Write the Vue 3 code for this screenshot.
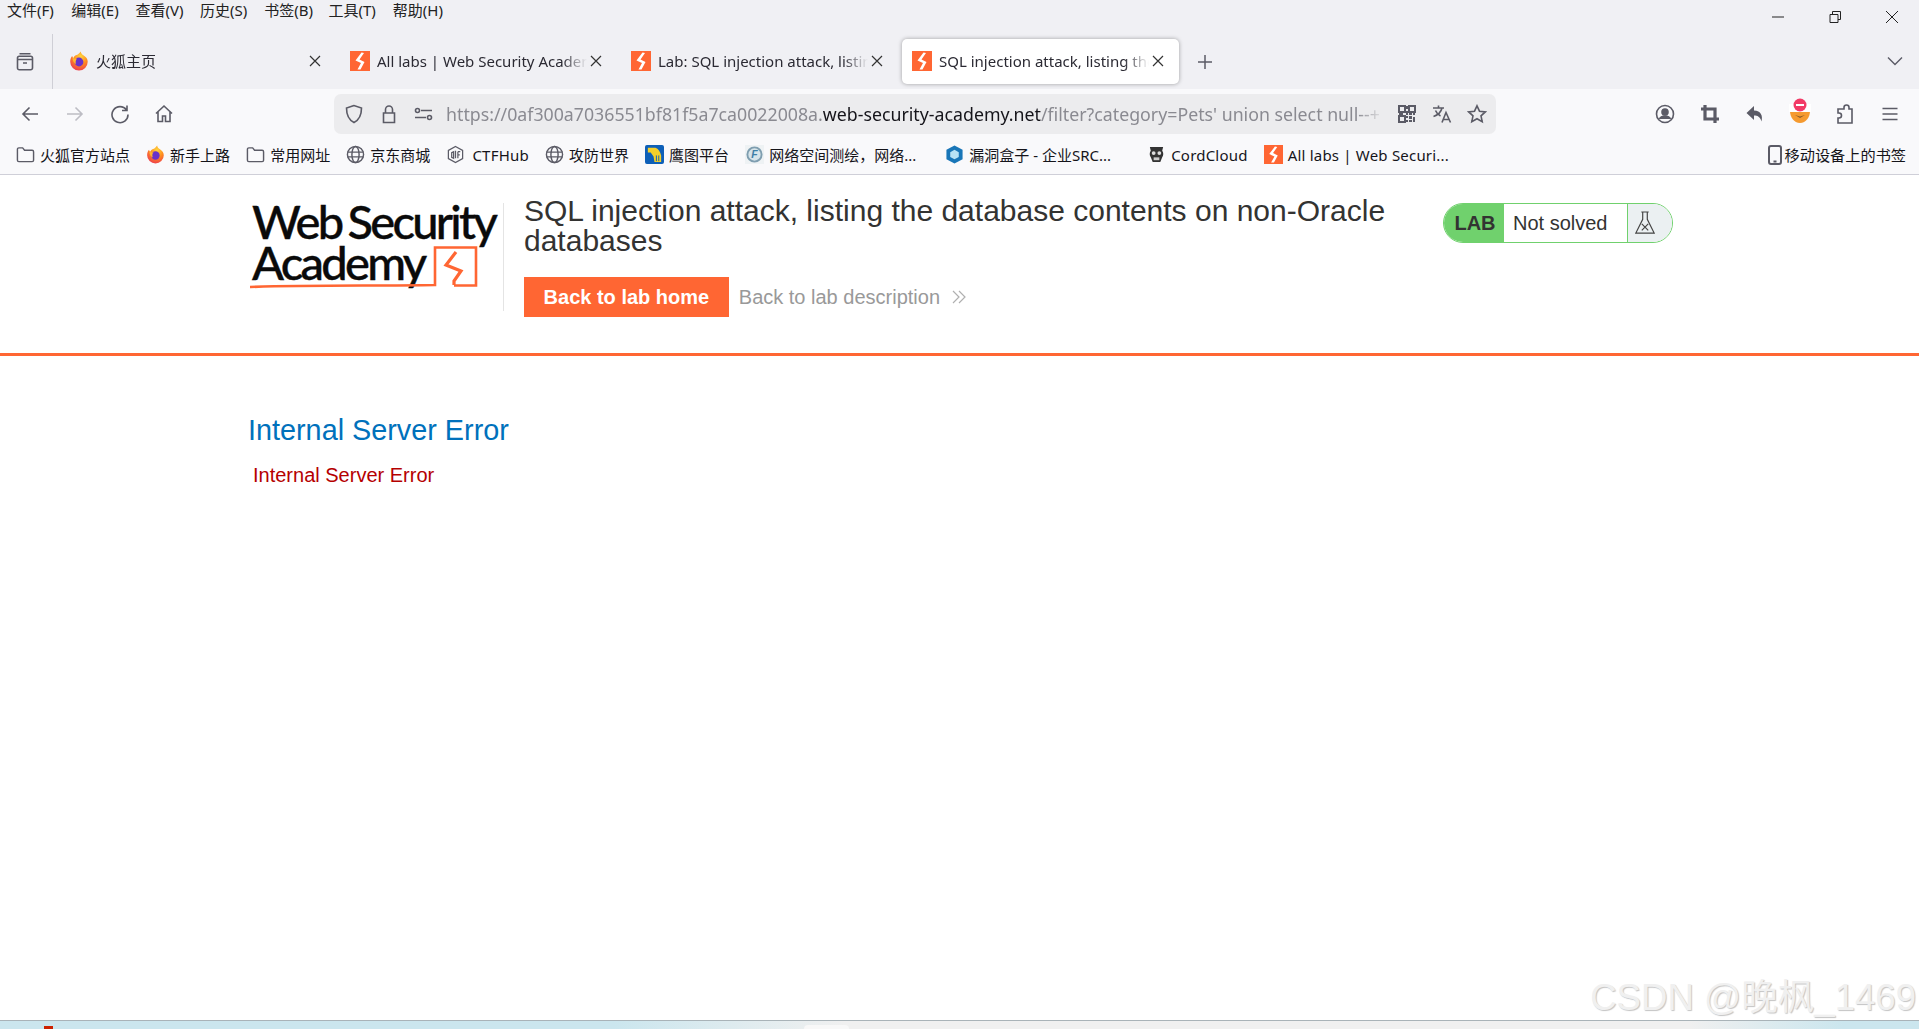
<script setup>
const menus = ['文件(F)', '编辑(E)', '查看(V)', '历史(S)', '书签(B)', '工具(T)', '帮助(H)']
const tabs = [
  { title: '火狐主页', icon: 'fx' },
  { title: 'All labs | Web Security Academy', icon: 'ps' },
  { title: 'Lab: SQL injection attack, listing', icon: 'ps' },
  { title: 'SQL injection attack, listing the', icon: 'ps', active: true }
]
const bookmarks = [
  { text: '火狐官方站点', icon: 'folder' },
  { text: '新手上路', icon: 'fx' },
  { text: '常用网址', icon: 'folder' },
  { text: '京东商城', icon: 'globe' },
  { text: 'CTFHub', icon: 'ctf', latin: true },
  { text: '攻防世界', icon: 'globe' },
  { text: '鹰图平台', icon: 'eagle' },
  { text: '网络空间测绘，网络...', icon: 'fofa', trunc: true },
  { text: '漏洞盒子 - 企业SRC...', icon: 'hex', trunc: true, wide: true },
  { text: 'CordCloud', icon: 'cord', latin: true },
  { text: 'All labs | Web Securi...', icon: 'ps', latin: true }
]
</script>

<template>
  <div class="window">
    <div class="titlebar">
      <nav class="menus">
        <span v-for="m in menus" :key="m" class="menu">{{ m }}</span>
      </nav>
      <div class="winctl">
        <svg class="wc" viewBox="0 0 16 16"><path d="M2 8h12" /></svg>
        <svg class="wc" viewBox="0 0 16 16"><path d="M3 5.500h8v8H3zM5.500 5.500V2.500h8v8H11" /></svg>
        <svg class="wc" viewBox="0 0 16 16"><path d="M2 2l12 12M14 2L2 14" /></svg>
      </div>
    </div>

    <div class="tabstrip">
      <div class="viewbtn">
        <svg class="ico" viewBox="0 0 20 20"><path d="M2.500 7.500h15v8.500a1.800 1.800 0 0 1-1.800 1.800H4.300A1.800 1.800 0 0 1 2.500 16zM2.500 7.500V6a1.800 1.800 0 0 1 1.800-1.800h11.400A1.800 1.800 0 0 1 17.500 6v1.500M4.500 1.800h11M8 11h4" /></svg>
      </div>
      <div class="tabs">
        <div v-for="t in tabs" :key="t.title" class="tab" :class="{ active: t.active }">
          <svg v-if="t.icon === 'fx'" class="fav" viewBox="0 0 20 20">
            <defs>
              <radialGradient id="fxg" cx="0.6" cy="0.25" r="0.9">
                <stop offset="0" stop-color="#ffd53d" />
                <stop offset="0.45" stop-color="#ff8a1f" />
                <stop offset="1" stop-color="#e8235c" />
              </radialGradient>
            </defs>
            <path fill="url(#fxg)" d="M10 19.500a8.800 8.800 0 0 1-8.800-8.800c0-2.400.8-4.400 2-5.700.2 1 .6 1.600 1.200 2 .9-2 2.700-3 4.400-3.400C10 2.600 11 1.400 11.700.5c.3 1.700 1.300 3 3 4 2.300 1.500 4 3.400 4 6.200A8.800 8.800 0 0 1 10 19.500z" />
            <circle cx="10" cy="11" r="4.400" fill="#6a32c9" />
            <path fill="#ffb52e" d="M3.500 6.500c1.500 1 3 1.500 4.500 1.200-1.300 1.300-1.800 3.500-.8 5.300-2-.6-3.700-3-3.700-6.500z" />
          </svg>
          <svg v-else class="fav" viewBox="0 0 20 20">
            <rect width="20" height="20" fill="#ff6633" />
            <path fill="#fff" d="M11.500 1.500 5.500 9.500l5.500 2.500-3.500 6.500h3l4-7.500-5-2.500 4.500-6.500z" />
          </svg>
          <span class="tabtitle">{{ t.title }}</span>
          <svg class="close" viewBox="0 0 12 12"><path d="M1 1l10 10M11 1L1 11" /></svg>
        </div>
        <svg class="plus" viewBox="0 0 16 16"><path d="M8 1v14M1 8h14" /></svg>
      </div>
      <svg class="chev" viewBox="0 0 16 10"><path d="M1 1.500l7 7 7-7" /></svg>
    </div>

    <div class="navbar">
      <div class="btn"><svg class="ico" viewBox="0 0 20 20"><path d="M18 10H3M9.500 3.500 3 10l6.500 6.500" /></svg></div>
      <div class="btn dim"><svg class="ico" viewBox="0 0 20 20"><path d="M2 10h15M10.500 3.500 17 10l-6.500 6.500" /></svg></div>
      <div class="btn"><svg class="ico" viewBox="0 0 20 20"><path d="M16.500 6A8 8 0 1 0 18 10.500M17 1.500V6.500h-5" /></svg></div>
      <div class="btn home"><svg class="ico" viewBox="0 0 20 20"><path d="M2 9.500 10 2l8 7.500M4 8v9.500h4.500V12h3v5.500H16V8" /></svg></div>
      <div class="urlbar">
        <svg class="ico ui" viewBox="0 0 20 20"><path d="M10 1.500 2.500 4c0 7 1.500 11.500 7.500 14.500C16 15.500 17.500 11 17.500 4z" /></svg>
        <svg class="ico ui" viewBox="0 0 20 20"><path d="M4.500 9h11v9.500h-11zM6.500 9V5.500a3.500 3.500 0 0 1 7 0V9" /></svg>
        <svg class="ico ui" viewBox="0 0 20 20"><path d="M7 6.500h11M1 13.500h11" /><circle cx="3.500" cy="6.500" r="2" /><circle cx="15.500" cy="13.500" r="2" /></svg>
        <div class="url"><span class="g">https://0af300a7036551bf81f5a7ca0022008a.</span><span class="d">web-security-academy.net</span><span class="g">/filter?category=Pets' union select null--+</span></div>
        <svg class="ico qr" viewBox="0 0 20 20">
          <path d="M2 2h6v6H2zM12 2h6v6h-6zM2 12h6v6H2z" fill="none" stroke="#5b5b66" stroke-width="2" />
          <path d="M9 2h2v3H9zM9 7h2v4H9zM2 9h4v2H2zM12 9h3v2h-3zM16 9h2v2h-2zM9 12h2v2H9zM12 12h3v3h-3zM16 13h2v5h-2zM9 16h2v2H9zM12 16h3v2h-3z" fill="#5b5b66" stroke="none" />
        </svg>
        <svg class="ico ui2" viewBox="0 0 20 20"><path d="M1 4h11M6.500 1.500V4M10 4c-.8 3.500-4 7-8.500 8.500M3.500 6.500c1 2.500 3 4.500 5 5.500M10 18.500 14 8.500l4.500 10M11.500 15.500h5.500" /></svg>
        <svg class="ico ui2" viewBox="0 0 20 20"><path d="M10 1.800l2.500 5.400 5.800.7-4.300 4 1.200 5.800-5.200-3-5.200 3L6 11.900l-4.300-4 5.800-.7z" /></svg>
      </div>
      <div class="actions">
        <div class="btn"><svg class="ico" viewBox="0 0 20 20"><circle cx="10" cy="10" r="8.500" /><circle cx="10" cy="8" r="3" fill="#5b5b66" /><path d="M4.500 15c1-2.500 3-3 5.500-3s4.500.5 5.500 3" fill="#5b5b66" /></svg></div>
        <div class="btn"><svg class="ico thick" viewBox="0 0 20 20"><path d="M5 1v14h14M1 5h14v14" /></svg></div>
        <div class="btn"><svg class="ico" viewBox="0 0 20 20"><path fill="#5b5b66" stroke="none" d="M9 2 1.500 9 9 16v-4.500c3.500 0 6 1 7.500 6 1.500-6-.5-10.500-7.500-11z" /></svg></div>
        <div class="btn fox">
          <svg viewBox="0 0 26 26" width="26" height="26">
            <path fill="#f59a2f" d="M3 13h20c0 6-4 12-10 12S3 19 3 13z" />
            <path fill="#8a5a2a" d="M8 17l5 3 5-3-5 1.500z" />
            <rect x="2" y="6" width="22" height="8" fill="#fff" />
            <circle cx="13" cy="7" r="6.500" fill="#f23a66" />
            <rect x="9" y="6" width="8" height="2" fill="#fff" />
          </svg>
        </div>
        <div class="btn"><svg class="ico" viewBox="0 0 20 20"><path d="M9 5V3.500a2.500 2.500 0 0 1 5 0V5h3v14H3v-5h1a2.500 2.500 0 0 0 0-5H3V5z" /></svg></div>
        <div class="btn"><svg class="ico" viewBox="0 0 20 20"><path d="M2.500 4.500h15M2.500 10h15M2.500 15.500h15" /></svg></div>
      </div>
    </div>

    <div class="bookmarks">
      <div v-for="b in bookmarks" :key="b.text" class="bm" :class="{ latin: b.latin, trunc: b.trunc, wide: b.wide }">
        <svg v-if="b.icon === 'folder'" class="bi" viewBox="0 0 20 20"><path d="M1.500 4.500a1.500 1.500 0 0 1 1.500-1.500h4l2 2.500h8a1.500 1.500 0 0 1 1.500 1.500v9a1.500 1.500 0 0 1-1.500 1.500H3a1.500 1.500 0 0 1-1.500-1.500z" /></svg>
        <svg v-else-if="b.icon === 'globe'" class="bi" viewBox="0 0 20 20"><circle cx="10" cy="10" r="8.500" /><ellipse cx="10" cy="10" rx="3.800" ry="8.500" /><path d="M1.500 7.500h17M1.500 12.500h17" /></svg>
        <svg v-else-if="b.icon === 'fx'" class="bi plain" viewBox="0 0 20 20">
          <path fill="url(#fxg)" d="M10 19.500a8.800 8.800 0 0 1-8.800-8.800c0-2.400.8-4.400 2-5.700.2 1 .6 1.600 1.200 2 .9-2 2.700-3 4.400-3.400C10 2.600 11 1.400 11.700.5c.3 1.700 1.300 3 3 4 2.300 1.500 4 3.400 4 6.200A8.800 8.800 0 0 1 10 19.500z" />
          <circle cx="10" cy="11" r="4.400" fill="#6a32c9" />
          <path fill="#ffb52e" d="M3.500 6.500c1.500 1 3 1.500 4.500 1.200-1.300 1.300-1.800 3.500-.8 5.300-2-.6-3.700-3-3.700-6.500z" />
        </svg>
        <svg v-else-if="b.icon === 'ctf'" class="bi ctf" viewBox="0 0 20 20"><path d="M10 1.500 17.500 5.700v8.600L10 18.500 2.500 14.300V5.700zM6 8v5l2 1V7zM10 6v8M12.500 7h2.500M12.500 7v7M12.500 10.500h2" /></svg>
        <svg v-else-if="b.icon === 'eagle'" class="bi plain" viewBox="0 0 20 20">
          <rect width="20" height="20" rx="2" fill="#0d5fb8" />
          <path fill="#f4cf2a" d="M3 3h8c3 1 5 4 6 8v7h-7l-1-6-3-4H3z" />
          <path stroke="#0d5fb8" stroke-width="1" fill="none" d="M12 11v6M14.500 11v6" />
        </svg>
        <svg v-else-if="b.icon === 'fofa'" class="bi plain" viewBox="0 0 20 20">
          <rect width="20" height="20" fill="#eef2f4" />
          <circle cx="10" cy="10" r="7.500" fill="#d6e4ea" stroke="#7f9eb0" stroke-width="2" />
          <text x="10" y="14" text-anchor="middle" class="ftxt">F</text>
        </svg>
        <svg v-else-if="b.icon === 'hex'" class="bi plain" viewBox="0 0 20 20">
          <path fill="#1976b8" d="M10 .5 18.500 5v10L10 19.500 1.500 15V5z" />
          <path fill="#b9e3f5" d="M10 5 14.500 7.500v5L10 15l-4.500-2.500v-5z" />
        </svg>
        <svg v-else-if="b.icon === 'cord'" class="bi plain" viewBox="0 0 20 20">
          <path fill="#333" d="M3 2h14l-1 4c1.500 2 1.500 5 0 7l-2 5H6l-2-5c-1.500-2-1.500-5 0-7z" />
          <circle cx="7" cy="8.500" r="2" fill="#ddd" /><circle cx="13" cy="8.500" r="2" fill="#ddd" />
          <path fill="#ccc" d="M7 13h6v3H7z" />
        </svg>
        <svg v-else class="bi plain" viewBox="0 0 20 20">
          <rect width="20" height="20" fill="#ff6633" />
          <path fill="#fff" d="M11.500 1.500 5.500 9.500l5.500 2.500-3.500 6.500h3l4-7.500-5-2.500 4.500-6.500z" />
        </svg>
        <span>{{ b.text }}</span>
      </div>
      <div class="bm mobile">
        <svg class="bi phone" viewBox="0 0 14 20"><path d="M3 1h8a2 2 0 0 1 2 2v14a2 2 0 0 1-2 2H3a2 2 0 0 1-2-2V3a2 2 0 0 1 2-2zM5.500 16.500h3" /></svg>
        <span>移动设备上的书签</span>
      </div>
    </div>

    <main class="page">
      <header class="lab-header">
        <div class="logo">
          <div class="logotext">Web Security<br />Academy</div>
          <svg class="logomark" viewBox="0 0 240 100" width="240" height="100">
            <path d="M1 87C60 85 130 86 186 85V47.500H227V85.500H205" />
            <path class="bolt" d="M207 52 197 65 212 71 205 81V85" />
          </svg>
        </div>
        <div class="lab-main">
          <h2 class="lab-title">SQL injection attack, listing the database contents on non-Oracle databases</h2>
          <div class="lab-links">
            <a class="btn-home">Back to lab home</a>
            <a class="back-link">Back to lab description</a>
            <svg class="dbl" viewBox="0 0 16 16"><path d="M2 2l6 6-6 6M8 2l6 6-6 6" /></svg>
          </div>
        </div>
        <div class="status">
          <span class="lab">LAB</span>
          <span class="solved">Not solved</span>
          <span class="flask">
            <svg viewBox="0 0 24 28" width="22" height="26"><path d="M8 2h8M9.500 2v8L2 25h20L14.500 10V2M8.500 15l7 7M15.500 15l-7 7" /></svg>
          </span>
        </div>
      </header>
      <section class="err">
        <h1>Internal Server Error</h1>
        <p>Internal Server Error</p>
      </section>
    </main>

    <div class="taskbar"><i class="redmark"></i><i class="whitemark"></i></div>
    <div class="watermark">CSDN @晚枫_1469</div>
  </div>
</template>

<style>
html, body { margin: 0; padding: 0; background: #fff; overflow: hidden; }
</style>

<style scoped>
.window {
  position: relative;
  width: 1919px;
  height: 1029px;
  display: flex;
  flex-direction: column;
  overflow: hidden;
  font-family: "Noto Sans", "Noto Sans CJK SC", sans-serif;
  color: #15141a;
}
svg { display: block; flex: none; }
.ico { width: 20px; height: 20px; fill: none; stroke: #5b5b66; stroke-width: 1.6; }
.titlebar {
  height: 34px;
  background: #f0f0f4;
  display: flex;
  justify-content: space-between;
}
.menus { display: flex; padding-left: 7px; }
.menu { width: 64.3px; font-size: 15px; line-height: 20px; color: #222; white-space: nowrap; }
.winctl { display: flex; gap: 41px; padding: 9px 19px 0 0; }
.wc { width: 16px; height: 16px; fill: none; stroke: #222; stroke-width: 1; }

.tabstrip {
  height: 55px;
  background: #f0f0f4;
  display: flex;
  align-items: stretch;
  position: relative;
}
.viewbtn {
  width: 53px;
  box-sizing: border-box;
  border-right: 1px solid #cfcfd6;
  display: flex;
  align-items: center;
  justify-content: center;
}
.viewbtn .ico { width: 20px; height: 20px; margin: 1px 2px 0 0; }
.tabs { display: flex; align-items: flex-start; gap: 4px; margin-left: 6px; flex: 1; }
.tab {
  width: 277px;
  height: 45px;
  margin-top: 5px;
  box-sizing: border-box;
  padding: 0 14px 2px 10px;
  border-radius: 5px;
  display: flex;
  align-items: center;
}
.tab.active { background: #fff; box-shadow: 0 0 4px rgba(0, 0, 0, 0.35); }
.fav { width: 20px; height: 20px; }
.tabtitle {
  margin-left: 7px;
  width: 210px;
  overflow: hidden;
  white-space: nowrap;
  font-size: 15px;
  line-height: 20px;
  color: #2b2a33;
  -webkit-mask-image: linear-gradient(to right, #000 88%, transparent 100%);
  mask-image: linear-gradient(to right, #000 88%, transparent 100%);
}
.close { width: 12px; height: 12px; margin-left: 3px; fill: none; stroke: #333; stroke-width: 1.2; }
.plus { width: 16px; height: 16px; margin: 20px 0 0 14px; fill: none; stroke: #5b5b66; stroke-width: 1.5; }
.chev { width: 16px; height: 10px; margin: 22px 16px 0 0; fill: none; stroke: #5b5b66; stroke-width: 1.4; }

.navbar {
  height: 45px;
  box-sizing: border-box;
  padding: 5px 0 0 7px;
  background: #f9f9fb;
  display: flex;
  align-items: center;
}
.btn { width: 45px; height: 40px; display: flex; align-items: center; justify-content: center; }
.btn.home { margin-left: -1px; margin-right: 1px; }
.btn.dim .ico { stroke: #bdbdc4; }
.urlbar {
  margin-left: 147px;
  width: 1162px;
  height: 40px;
  background: #ececee;
  border-radius: 7px;
  display: flex;
  align-items: center;
  padding-left: 10px;
  box-sizing: border-box;
}
.ui { margin-right: 15px; }
.ui:nth-child(3) { margin-right: 14px; }
.url {
  width: 939px;
  margin-left: -2px;
  overflow: hidden;
  white-space: nowrap;
  font-size: 17.75px;
  line-height: 24px;
  -webkit-mask-image: linear-gradient(to right, #000 97%, transparent 100%);
  mask-image: linear-gradient(to right, #000 97%, transparent 100%);
}
.g { color: #8a8a91; }
.d { color: #15141a; }
.qr { margin-left: 12px; stroke: none; }
.ui2 { margin-left: 15px; }
.actions { display: flex; margin-left: auto; margin-right: 7px; }
.thick { stroke-width: 3.2; }
.fox svg { margin-top: -6px; }

.bookmarks {
  height: 41px;
  box-sizing: border-box;
  padding: 1px 13px 0 16px;
  background: #f9f9fb;
  border-bottom: 1px solid #cfcfd8;
  display: flex;
  align-items: center;
  gap: 16.1px;
  font-size: 15px;
  color: #15141a;
  white-space: nowrap;
}
.bm { display: flex; align-items: center; gap: 5px; line-height: 20px; }
.bm.latin { letter-spacing: 0.2px; }
.bm.trunc { margin-right: 13px; }
.bm.wide { margin-right: 20px; }
.bm.latin .ctf { margin-right: 2px; }
.bi { width: 19px; height: 19px; fill: none; stroke: #5b5b66; stroke-width: 1.5; }
.bi.plain { stroke: none; }
.ctf { stroke-width: 1.3; }
.ftxt { font: italic bold 11px "Liberation Sans", sans-serif; fill: #3d7ea6; }
.mobile { margin-left: auto; gap: 3px; font-size: 15.2px; }
.phone { width: 14px; height: 20px; stroke-width: 2; }

.page { flex: 1; background: #fff; font-family: "Liberation Sans", Arial, sans-serif; }
.lab-header {
  height: 178px;
  border-bottom: 3px solid #ff6633;
  box-sizing: content-box;
  display: flex;
  align-items: flex-start;
  padding-left: 250px;
}
.logo {
  position: relative;
  width: 254px;
  height: 108px;
  margin-top: 28px;
  box-sizing: border-box;
  border-right: 1px solid #e4e4e4;
}
.logotext {
  font-family: Lato, sans-serif;
  font-weight: 500;
  font-size: 47px;
  line-height: 41px;
  letter-spacing: -2.7px;
  word-spacing: -3px;
  color: #0a0a0a;
  white-space: nowrap;
  margin: -5px 0 0 2px;
  padding-top: 3px;
  -webkit-text-stroke: 0.4px #0a0a0a;
}
.logomark {
  position: absolute;
  left: -1px;
  top: -3px;
  fill: none;
  stroke: #ff6633;
  stroke-width: 2.6;
}
.bolt { stroke-width: 3.2; }
.lab-main { margin-left: 20px; width: 921px; padding-top: 21px; }
.lab-title {
  margin: 0;
  width: 880px;
  font-weight: 400;
  font-size: 30px;
  line-height: 30px;
  color: #333332;
}
.lab-links { display: flex; align-items: center; margin-top: 21px; }
.btn-home {
  background: #ff6633;
  color: #fff;
  font-weight: 700;
  font-size: 20px;
  line-height: 40px;
  padding: 0 19.6px;
}
.back-link { margin-left: 10px; color: #999; font-size: 20px; line-height: 40px; }
.dbl { width: 16px; height: 16px; margin-left: 11px; fill: none; stroke: #b0b0b0; stroke-width: 1.2; }
.status {
  margin: 28px 0 0 -2px;
  width: 230px;
  height: 40px;
  box-sizing: border-box;
  border: 1.5px solid #70d16d;
  border-radius: 20px;
  display: flex;
  overflow: hidden;
  font-size: 20px;
  color: #333332;
  line-height: 38px;
}
.lab { width: 60px; background: #70d16d; font-weight: 700; text-align: center; padding-left: 2px; box-sizing: border-box; }
.solved { width: 123px; padding-left: 9px; box-sizing: border-box; background: #fff; }
.flask { flex: 1; background: #ebf0f2; border-left: 1.5px solid #70d16d; display: flex; align-items: center; padding-left: 6px; }
.flask svg { fill: none; stroke: #444; stroke-width: 1.3; }
.err { padding: 56px 0 0 248px; }
.err h1 {
  margin: 0;
  font-weight: 400;
  font-size: 28.8px;
  line-height: 36px;
  color: #0071bc;
}
.err p {
  margin: 15px 0 0 5px;
  font-size: 20px;
  line-height: 24px;
  color: #b50000;
}
.taskbar {
  position: relative;
  height: 9px;
  flex: none;
  border-top: 1px solid #a9b3b8;
  box-sizing: border-box;
  background: linear-gradient(to right, #cbe6ee 0, #cbe6ee 32%, #f0f0f0 44%, #f0f0f0 88%, #cbe6ee 96%, #cbe6ee 100%);
}
.redmark { position: absolute; left: 44px; top: 5px; width: 9px; height: 3px; background: #cc2200; }
.whitemark { position: absolute; left: 804px; top: 4px; width: 45px; height: 4px; background: #f8f8f8; border-radius: 4px 4px 0 0; }
.watermark {
  position: absolute;
  right: 3px;
  top: 975px;
  font-family: "Liberation Sans", "Noto Sans CJK SC", sans-serif;
  font-size: 36.6px;
  line-height: 46px;
  color: #f0f0f0;
  text-shadow: 1px 1px 1px #c4c4c4;
  white-space: nowrap;
}
</style>
